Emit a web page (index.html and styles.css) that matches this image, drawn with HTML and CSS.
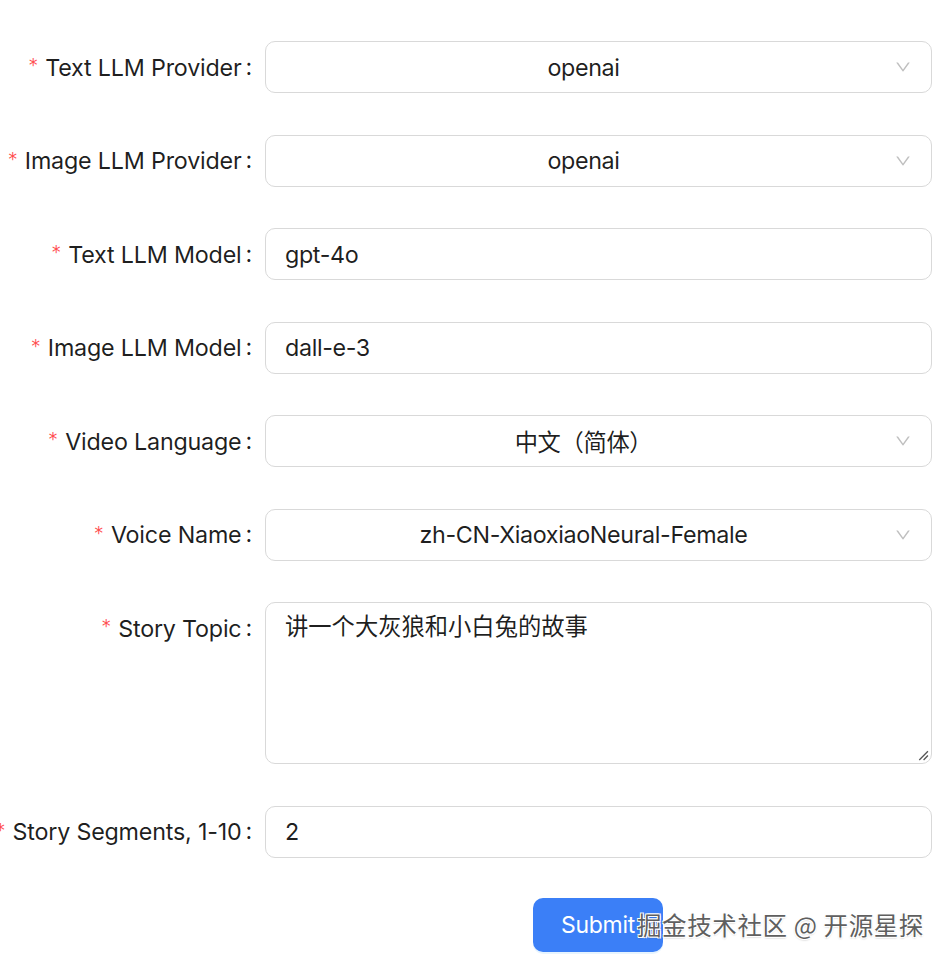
FILE: index.html
```html
<!DOCTYPE html>
<html lang="zh-CN">
<head>
<meta charset="utf-8">
<title>Story Video Form</title>
<link rel="stylesheet" href="styles.css">
</head>
<body>
<form class="form">
  <div class="row">
    <div class="label"><span class="req">*</span><span class="ltext">Text LLM Provider</span><span class="colon">:</span></div>
    <div class="ctrl"><div class="select"><span class="sel-val">openai</span><svg class="arrow" viewBox="0 0 1024 1024"><path d="M884 256h-75c-5.1 0-9.9 2.5-12.9 6.6L512 654.2 227.9 262.6c-3-4.1-7.8-6.6-12.9-6.6h-75c-6.5 0-10.3 7.4-6.5 12.7l352.6 486.1c12.8 17.6 39 17.6 51.7 0l352.6-486.1c3.9-5.3.1-12.7-6.4-12.7z"/></svg></div></div>
  </div>
  <div class="row">
    <div class="label"><span class="req">*</span><span class="ltext">Image LLM Provider</span><span class="colon">:</span></div>
    <div class="ctrl"><div class="select"><span class="sel-val">openai</span><svg class="arrow" viewBox="0 0 1024 1024"><path d="M884 256h-75c-5.1 0-9.9 2.5-12.9 6.6L512 654.2 227.9 262.6c-3-4.1-7.8-6.6-12.9-6.6h-75c-6.5 0-10.3 7.4-6.5 12.7l352.6 486.1c12.8 17.6 39 17.6 51.7 0l352.6-486.1c3.9-5.3.1-12.7-6.4-12.7z"/></svg></div></div>
  </div>
  <div class="row">
    <div class="label"><span class="req">*</span><span class="ltext">Text LLM Model</span><span class="colon">:</span></div>
    <div class="ctrl"><div class="input">gpt-4o</div></div>
  </div>
  <div class="row">
    <div class="label"><span class="req">*</span><span class="ltext">Image LLM Model</span><span class="colon">:</span></div>
    <div class="ctrl"><div class="input">dall-e-3</div></div>
  </div>
  <div class="row">
    <div class="label"><span class="req">*</span><span class="ltext">Video Language</span><span class="colon">:</span></div>
    <div class="ctrl"><div class="select"><span class="sel-val">中文（简体）</span><svg class="arrow" viewBox="0 0 1024 1024"><path d="M884 256h-75c-5.1 0-9.9 2.5-12.9 6.6L512 654.2 227.9 262.6c-3-4.1-7.8-6.6-12.9-6.6h-75c-6.5 0-10.3 7.4-6.5 12.7l352.6 486.1c12.8 17.6 39 17.6 51.7 0l352.6-486.1c3.9-5.3.1-12.7-6.4-12.7z"/></svg></div></div>
  </div>
  <div class="row">
    <div class="label"><span class="req">*</span><span class="ltext">Voice Name</span><span class="colon">:</span></div>
    <div class="ctrl"><div class="select"><span class="sel-val">zh-CN-XiaoxiaoNeural-Female</span><svg class="arrow" viewBox="0 0 1024 1024"><path d="M884 256h-75c-5.1 0-9.9 2.5-12.9 6.6L512 654.2 227.9 262.6c-3-4.1-7.8-6.6-12.9-6.6h-75c-6.5 0-10.3 7.4-6.5 12.7l352.6 486.1c12.8 17.6 39 17.6 51.7 0l352.6-486.1c3.9-5.3.1-12.7-6.4-12.7z"/></svg></div></div>
  </div>
  <div class="row row-top">
    <div class="label"><span class="req">*</span><span class="ltext">Story Topic</span><span class="colon">:</span></div>
    <div class="ctrl"><div class="textarea">讲一个大灰狼和小白兔的故事<svg class="grip" viewBox="0 0 12 12"><path d="M11 3 L3 11 M11 7 L7 11"/></svg></div></div>
  </div>
  <div class="row">
    <div class="label"><span class="req">*</span><span class="ltext">Story Segments, 1-10</span><span class="colon">:</span></div>
    <div class="ctrl"><div class="input">2</div></div>
  </div>
  <div class="row row-btn">
    <div class="label"></div>
    <div class="ctrl"><button type="button" class="btn">Submit</button></div>
  </div>
</form>
<div class="watermark">掘金技术社区 @ 开源星探</div>
</body>
</html>
```
FILE: styles.css
```css
html, body {
  margin: 0;
  padding: 0;
  background: #fff;
}
body {
  font-family: "Inter", "Noto Sans CJK SC", sans-serif;
  font-size: 23.3px;
  letter-spacing: -0.36px;
  color: rgba(0, 0, 0, 0.88);
  overflow: hidden;
  height: 966px;
  position: relative;
}
.form {
  padding-top: 41px;
  padding-right: 16px;
}
.row {
  display: flex;
  margin-bottom: 41.5px;
}
.label {
  width: 265px;
  flex: none;
  display: flex;
  justify-content: flex-end;
  align-items: center;
  height: 52px;
  white-space: nowrap;
  letter-spacing: -0.2px;
}
.req {
  color: #ff4d4f;
  font-size: 17px;
  margin-right: 8px;
  font-family: "DejaVu Sans", sans-serif;
  position: relative;
  top: -2px;
}
.colon {
  margin-left: 4px;
  margin-right: 13px;
  position: relative;
  top: -1px;
}
.ctrl {
  flex: 1;
  min-width: 0;
}
.select, .input, .textarea {
  box-sizing: border-box;
  border: 1px solid #d9d9d9;
  border-radius: 10px;
  background: #fff;
}
.select {
  height: 52px;
  display: flex;
  align-items: center;
  padding: 0 48px 0 18px;
  position: relative;
}
.sel-val {
  flex: 1;
  text-align: center;
}
.arrow {
  position: absolute;
  right: 19px;
  top: 16px;
  width: 18px;
  height: 18px;
  fill: rgba(0, 0, 0, 0.25);
}
.input {
  height: 52px;
  display: flex;
  align-items: center;
  padding: 0 19px;
}
.textarea {
  height: 162px;
  padding: 6px 19px;
  line-height: 36px;
  letter-spacing: 0;
  position: relative;
}
.grip {
  position: absolute;
  right: 2px;
  bottom: 2px;
  width: 13px;
  height: 13px;
  stroke: #555;
  stroke-width: 1.2;
  fill: none;
}
.btn {
  margin-left: 268px;
  height: 54px;
  width: 130px;
  border: none;
  border-radius: 10px;
  background: #3b7ff7;
  color: #fff;
  font-family: inherit;
  font-size: 23px;
  letter-spacing: -0.3px;
  box-shadow: 0 2px 0 rgba(5, 145, 255, 0.1);
  text-align: left;
  padding: 0 0 0 28px;
}
.row-btn {
  margin-bottom: 0;
  margin-top: -1px;
}
.watermark {
  position: absolute;
  left: 637px;
  top: 907px;
  font-size: 24.5px;
  letter-spacing: 0.6px;
  color: #5f5f5f;
  text-shadow: 1px 1px 0 #fff, -1px -1px 0 #fff, 1px -1px 0 #fff, -1px 1px 0 #fff, 0 1px 2px rgba(0,0,0,0.35);
  font-family: "Noto Sans CJK SC", sans-serif;
  white-space: nowrap;
}
```
